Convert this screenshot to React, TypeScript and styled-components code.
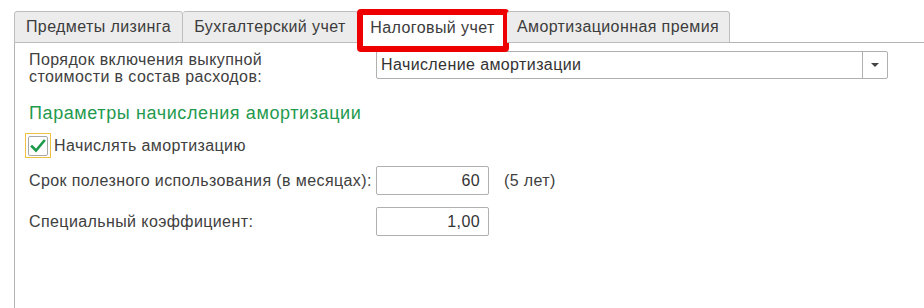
import React from "react";
import styled, { createGlobalStyle } from "styled-components";

const Global = createGlobalStyle`
  html, body { margin: 0; padding: 0; background: #fff; }
  body { font-family: "Liberation Sans", Arial, sans-serif; color: #404040; }
  * { box-sizing: border-box; }
`;

const Page = styled.div`
  width: 924px;
  height: 308px;
  padding: 11px 0 0 14px;
  display: flex;
  flex-direction: column;
  overflow: hidden;
  font-size: 16px;
  letter-spacing: 0.4px;
`;

const TabStrip = styled.div`
  display: flex;
  height: 32px;
  position: relative;
  z-index: 1;
`;

const Tab = styled.div<{ $active?: boolean; $first?: boolean; $w: number }>`
  position: relative;
  width: ${(p) => p.$w}px;
  height: ${(p) => (p.$active ? 33 : 32)}px;
  display: flex;
  align-items: center;
  justify-content: center;
  color: #3c3c3c;
  background: ${(p) => (p.$active ? "#fff" : "#ececec")};
  border: 1px solid #bdbdbd;
  border-bottom: ${(p) => (p.$active ? "none" : "1px solid #bdbdbd")};
  border-left-width: ${(p) => (p.$first || p.$active ? 1 : 0)}px;
  border-radius: 3px 3px 0 0;
  white-space: nowrap;
`;

const Highlight = styled.div`
  position: absolute;
  left: -2px;
  right: -3px;
  top: -3px;
  bottom: -8px;
  border: 6px solid #ee0000;
  border-radius: 4px;
  pointer-events: none;
`;

const Panel = styled.div`
  flex: 1;
  border-top: 1px solid #b4b4b4;
  border-left: 1px solid #b4b4b4;
  margin-top: -1px;
  padding: 8px 0 0 14px;
  display: flex;
  flex-direction: column;
`;

const Row = styled.div<{ $mt?: number; $align?: string }>`
  display: flex;
  align-items: ${(p) => p.$align || "center"};
  margin-top: ${(p) => p.$mt || 0}px;
`;

const Label = styled.div`
  width: 347px;
  line-height: 17px;
  color: #404040;
  white-space: nowrap;
`;

const Combo = styled.div`
  width: 512px;
  height: 28px;
  border: 1px solid #b0b0b0;
  border-radius: 2px;
  display: flex;
  align-items: center;
  color: #333;
`;

const ComboText = styled.div`
  flex: 1;
  padding-left: 4px;
`;

const ComboButton = styled.div`
  width: 25px;
  height: 100%;
  border-left: 1px solid #b0b0b0;
  display: flex;
  align-items: center;
  justify-content: center;
`;

const Arrow = styled.div`
  width: 0;
  height: 0;
  border-left: 4px solid transparent;
  border-right: 4px solid transparent;
  border-top: 4px solid #444;
`;

const Heading = styled.div`
  margin-top: 17px;
  font-size: 18px;
  letter-spacing: 0.6px;
  line-height: 22px;
  color: #1f9a4f;
`;

const CheckWrap = styled.div`
  width: 26px;
  height: 25px;
  border: 1px solid #f0c040;
  margin-left: -4px;
  display: flex;
  align-items: center;
  justify-content: center;
`;

const CheckBox = styled.div`
  width: 20px;
  height: 20px;
  border: 1px solid #a8a8a8;
  border-radius: 2px;
  background: #fff;
  display: flex;
  align-items: center;
  justify-content: center;
`;

const CheckLabel = styled.div`
  color: #404040;
  margin-left: 3px;
`;

const Input = styled.div`
  width: 113px;
  height: 29px;
  border: 1px solid #b0b0b0;
  border-radius: 2px;
  display: flex;
  align-items: center;
  justify-content: flex-end;
  padding-right: 8px;
  color: #333;
`;

const Note = styled.div`
  color: #404040;
  margin-left: 15px;
`;

export default function App() {
  return (
    <>
      <Global />
      <Page>
        <TabStrip>
          <Tab $w={169} $first>Предметы лизинга</Tab>
          <Tab $w={175}>Бухгалтерский учет</Tab>
          <Tab $w={149} $active>
            Налоговый учет
            <Highlight />
          </Tab>
          <Tab $w={223}>Амортизационная премия</Tab>
        </TabStrip>
        <Panel>
          <Row $align="flex-start">
            <Label>
              Порядок включения выкупной
              <br />
              стоимости в состав расходов:
            </Label>
            <Combo>
              <ComboText>Начисление амортизации</ComboText>
              <ComboButton>
                <Arrow />
              </ComboButton>
            </Combo>
          </Row>
          <Heading>Параметры начисления амортизации</Heading>
          <Row $mt={9}>
            <CheckWrap>
              <CheckBox>
                <svg width="16" height="14" viewBox="0 0 16 14">
                  <path d="M2 7.5 L6 11.5 L14 2" fill="none" stroke="#1e9a4c" strokeWidth="2.6" strokeLinecap="square" />
                </svg>
              </CheckBox>
            </CheckWrap>
            <CheckLabel>Начислять амортизацию</CheckLabel>
          </Row>
          <Row $mt={8}>
            <Label>Срок полезного использования (в месяцах):</Label>
            <Input>60</Input>
            <Note>(5 лет)</Note>
          </Row>
          <Row $mt={12}>
            <Label>Специальный коэффициент:</Label>
            <Input>1,00</Input>
          </Row>
        </Panel>
      </Page>
    </>
  );
}
